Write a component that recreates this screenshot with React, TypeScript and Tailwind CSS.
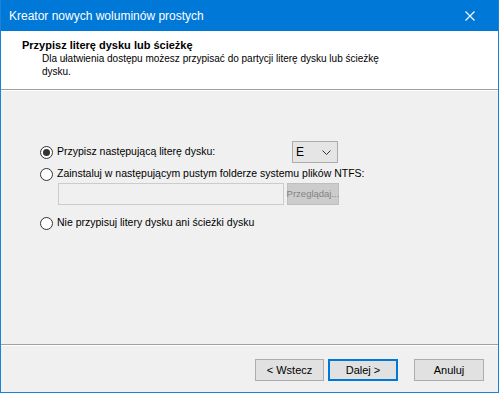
import React from "react";

const font = { fontFamily: '"Liberation Sans", Arial, sans-serif' };

function Radio({ checked }: { checked?: boolean }) {
  return (
    <span className="flex h-[13px] w-[13px] shrink-0 items-center justify-center rounded-full border border-[#333333] bg-white">
      {checked && <span className="h-[7px] w-[7px] rounded-full bg-[#333333]" />}
    </span>
  );
}

export default function App() {
  return (
    <div
      className="flex h-[393px] w-[499px] flex-col border border-t-0 border-[#1883d7] bg-[#f0f0f0] text-[10.5px] text-black"
      style={font}
    >
      {/* pasek tytułu */}
      <div className="flex h-[31px] shrink-0 items-center justify-between bg-[#0078d7] pl-[8px] pr-[23px]">
        <span className="text-[12px] text-white">Kreator nowych woluminów prostych</span>
        <svg width="10" height="10" viewBox="0 0 10 10" className="text-white">
          <path d="M0.5 0.5 L9.5 9.5 M9.5 0.5 L0.5 9.5" stroke="currentColor" strokeWidth="1.1" />
        </svg>
      </div>

      {/* nagłówek */}
      <div className="flex h-[58px] shrink-0 flex-col bg-white pl-[21px] pt-[8px] leading-[13px]">
        <span className="text-[11px] font-bold">Przypisz literę dysku lub ścieżkę</span>
        <span className="pl-[20px] text-[10px]">
          Dla ułatwienia dostępu możesz przypisać do partycji literę dysku lub ścieżkę
        </span>
        <span className="pl-[20px] text-[10px]">dysku.</span>
      </div>
      <div className="h-px shrink-0 bg-[#a0a0a0]" />
      <div className="h-px shrink-0 bg-white" />

      {/* treść */}
      <div className="flex flex-1 flex-col pl-[39px] pt-[50px]">
        <div className="flex h-[22px] items-center">
          <Radio checked />
          <span className="ml-[4px] w-[235px]">Przypisz następującą literę dysku:</span>
          <div className="flex h-[22px] w-[46px] items-center justify-between border border-[#acacac] bg-[#e5e5e5] pl-[3px] pr-[6px]">
            <span className="text-[12px]">E</span>
            <svg width="9" height="5" viewBox="0 0 9 5">
              <path d="M0.5 0.5 L4.5 4.5 L8.5 0.5" stroke="#333" strokeWidth="1" fill="none" />
            </svg>
          </div>
        </div>
        <div className="mt-[4px] flex h-[14px] items-center">
          <Radio />
          <span className="ml-[4px]">Zainstaluj w następującym pustym folderze systemu plików NTFS:</span>
        </div>
        <div className="ml-[18px] mt-[2px] flex gap-[3px]">
          <div className="h-[22px] w-[226px] border border-[#cccccc] bg-[#f0f0f0]" />
          <div className="flex h-[22px] w-[52px] items-center justify-center whitespace-nowrap border border-[#bfbfbf] bg-[#cccccc] text-[9.5px] text-[#838383]">
            Przeglądaj...
          </div>
        </div>
        <div className="mt-[11px] flex h-[14px] items-center">
          <Radio />
          <span className="ml-[4px]">Nie przypisuj litery dysku ani ścieżki dysku</span>
        </div>
      </div>

      <div className="h-px shrink-0 bg-[#a0a0a0]" />
      <div className="h-px shrink-0 bg-white" />

      {/* przyciski */}
      <div className="flex h-[46px] shrink-0 justify-end pr-[14px] pt-[13px] text-[11px]">
        <div className="flex h-[22px] w-[69px] items-center justify-center border border-[#adadad] bg-[#e1e1e1]">
          &lt; Wstecz
        </div>
        <div className="ml-[4px] flex h-[22px] w-[70px] items-center justify-center border-2 border-[#0078d7] bg-[#e1e1e1]">
          Dalej &gt;
        </div>
        <div className="ml-[16px] flex h-[22px] w-[70px] items-center justify-center border border-[#adadad] bg-[#e1e1e1]">
          Anuluj
        </div>
      </div>
    </div>
  );
}
